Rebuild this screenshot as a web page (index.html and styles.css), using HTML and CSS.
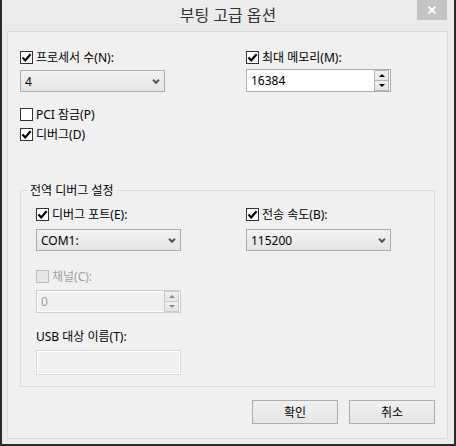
FILE: index.html
```html
<!DOCTYPE html>
<html lang="ko">
<head>
    <meta charset="UTF-8">
    <title>부팅 고급 옵션</title>
    <link rel="stylesheet" href="styles.css">
</head>
<body>
    <div class="window">
        <div class="titlebar">
            <span class="title">부팅 고급 옵션</span>
            <span class="close">
                <svg width="10" height="8" viewBox="0 0 10 8"><path d="M1.5 0.5 L8.5 7.5 M8.5 0.5 L1.5 7.5" stroke="#fff" stroke-width="2" fill="none"/></svg>
            </span>
        </div>

        <div class="panel">
            <div class="columns top">
                <div class="col">
                    <label class="check">
                        <span class="box"><svg width="11" height="11" viewBox="0 0 11 11"><path d="M1.5 5.6 L4.2 8.4 L9.6 2.2" stroke="#000" stroke-width="2.2" fill="none"/></svg></span>
                        프로세서 수(N):
                    </label>
                    <div class="combo">
                        <span>4</span>
                        <svg width="8" height="5" viewBox="0 0 8 5"><path d="M1 0.8 L4 3.8 L7 0.8" stroke="#555" stroke-width="2" fill="none"/></svg>
                    </div>
                    <label class="check pci">
                        <span class="box"></span>
                        PCI 잠금(P)
                    </label>
                    <label class="check debug">
                        <span class="box"><svg width="11" height="11" viewBox="0 0 11 11"><path d="M1.5 5.6 L4.2 8.4 L9.6 2.2" stroke="#000" stroke-width="2.2" fill="none"/></svg></span>
                        디버그(D)
                    </label>
                </div>
                <div class="col">
                    <label class="check">
                        <span class="box"><svg width="11" height="11" viewBox="0 0 11 11"><path d="M1.5 5.6 L4.2 8.4 L9.6 2.2" stroke="#000" stroke-width="2.2" fill="none"/></svg></span>
                        최대 메모리(M):
                    </label>
                    <div class="spin memory">
                        <span class="value">16384</span>
                        <span class="spin-btns">
                            <span class="sb"><span class="up"></span></span>
                            <span class="sb"><span class="down"></span></span>
                        </span>
                    </div>
                </div>
            </div>

            <fieldset class="group">
                <legend>전역 디버그 설정</legend>
                <div class="columns inner">
                    <div class="col">
                        <label class="check">
                            <span class="box"><svg width="11" height="11" viewBox="0 0 11 11"><path d="M1.5 5.6 L4.2 8.4 L9.6 2.2" stroke="#000" stroke-width="2.2" fill="none"/></svg></span>
                            디버그 포트(E):
                        </label>
                        <div class="combo port">
                            <span>COM1:</span>
                            <svg width="8" height="5" viewBox="0 0 8 5"><path d="M1 0.8 L4 3.8 L7 0.8" stroke="#555" stroke-width="2" fill="none"/></svg>
                        </div>
                    </div>
                    <div class="col">
                        <label class="check">
                            <span class="box"><svg width="11" height="11" viewBox="0 0 11 11"><path d="M1.5 5.6 L4.2 8.4 L9.6 2.2" stroke="#000" stroke-width="2.2" fill="none"/></svg></span>
                            전송 속도(B):
                        </label>
                        <div class="combo port">
                            <span>115200</span>
                            <svg width="8" height="5" viewBox="0 0 8 5"><path d="M1 0.8 L4 3.8 L7 0.8" stroke="#555" stroke-width="2" fill="none"/></svg>
                        </div>
                    </div>
                </div>

                <label class="check disabled channel">
                    <span class="box"></span>
                    채널(C):
                </label>
                <div class="spin disabled">
                    <span class="value">0</span>
                    <span class="spin-btns">
                        <span class="sb"><span class="up"></span></span>
                        <span class="sb"><span class="down"></span></span>
                    </span>
                </div>

                <div class="field-label">USB 대상 이름(T):</div>
                <div class="textbox"></div>
            </fieldset>

            <div class="buttons">
                <button>확인</button>
                <button>취소</button>
            </div>
        </div>
    </div>
</body>
</html>
```

FILE: styles.css
```css
:root {
    --window-bg: #ebebeb;
    --panel-bg: #f0f0f0;
    --line: #dcdcdc;
    --control-border: #acacac;
    --disabled-text: #a0a0a0;
}

body {
    margin: 0;
    font-family: "Noto Sans", "Noto Sans CJK KR", sans-serif;
    font-size: 12px;
    line-height: 15px;
    color: #000;
}

.window {
    width: 456px;
    height: 446px;
    box-sizing: border-box;
    background: var(--window-bg);
    border: 2px solid #2b2b2b;
    border-top: none;
}

.titlebar {
    height: 31px;
    display: grid;
    grid-template-columns: 1fr auto 1fr;
    padding-right: 7px;
    padding-left: 7px;
}

.title {
    grid-column: 2;
    font-size: 16px;
    line-height: 20px;
    margin-top: 5px;
    color: #333;
}

.close {
    grid-column: 3;
    justify-self: end;
    width: 30px;
    height: 20px;
    background: #c4c4c4;
    display: flex;
    align-items: center;
    justify-content: center;
}

.panel {
    margin: 0 6px 0 5px;
    height: 408px;
    box-sizing: border-box;
    border: 1px solid #dadada;
    background: var(--panel-bg);
    padding: 18px 12px 0 12px;
}

.columns {
    display: grid;
    grid-template-columns: 145px 145px;
    column-gap: 81px;
}

.columns.inner {
    column-gap: 65px;
}

.col {
    display: flex;
    flex-direction: column;
}

.check {
    display: flex;
    align-items: center;
    gap: 3px;
    height: 15px;
    white-space: nowrap;
}

.box {
    width: 13px;
    height: 13px;
    box-sizing: border-box;
    border: 1px solid #333;
    background: #fff;
    display: flex;
    flex-shrink: 0;
}

.check.disabled {
    color: var(--disabled-text);
}

.check.disabled .box {
    border-color: #bcbcbc;
    background: #e6e6e6;
}

.pci {
    margin-top: 15px;
}

.debug {
    margin-top: 5px;
}

.combo {
    margin-top: 5px;
    height: 22px;
    box-sizing: border-box;
    border: 1px solid var(--control-border);
    background: linear-gradient(#f2f2f2, #e5e5e5);
    padding: 0 4px;
    display: flex;
    align-items: center;
    justify-content: space-between;
}

.combo.port {
    margin-top: 7px;
}

.spin {
    height: 23px;
    box-sizing: border-box;
    border: 1px solid var(--control-border);
    background: #fff;
    display: flex;
}

.spin.memory {
    margin-top: 4px;
}

.spin .value {
    flex: 1;
    padding-left: 4px;
    line-height: 21px;
}

.spin-btns {
    width: 15px;
    margin: 0 1px 0 0;
    display: grid;
    grid-template-rows: 1fr 1fr;
}

.sb {
    box-sizing: border-box;
    border: 1px solid #b4b4b4;
    background: linear-gradient(#f2f2f2, #e5e5e5);
    display: flex;
    align-items: center;
    justify-content: center;
}

.sb + .sb {
    border-top: none;
}

.up {
    border-left: 3px solid transparent;
    border-right: 3px solid transparent;
    border-bottom: 3px solid #000;
}

.down {
    border-left: 3px solid transparent;
    border-right: 3px solid transparent;
    border-top: 3px solid #000;
}

.group {
    margin: 41px 0 0 0;
    border: 1px solid var(--line);
    padding: 9px 12px 11px 15px;
    min-width: 0;
}

.group legend {
    padding: 0 3px;
    margin-left: -9px;
    line-height: 15px;
}

.channel {
    margin-top: 18px;
}

.spin.disabled {
    margin-top: 6px;
    width: 145px;
    background: var(--panel-bg);
    border-color: #cccccc;
    box-shadow: inset 0 0 0 1px #fff;
    color: var(--disabled-text);
}

.spin.disabled .sb {
    border-color: #c8c8c8;
}

.spin.disabled .up {
    border-bottom-color: #8a8a8a;
}

.spin.disabled .down {
    border-top-color: #8a8a8a;
}

.field-label {
    margin-top: 16px;
}

.textbox {
    margin-top: 6px;
    width: 145px;
    height: 25px;
    box-sizing: border-box;
    border: 1px solid #d9d9d9;
    box-shadow: inset 0 0 0 1px #fff;
    background: var(--panel-bg);
}

.buttons {
    margin-top: 13px;
    display: flex;
    justify-content: flex-end;
    gap: 11px;
}

.buttons button {
    width: 86px;
    height: 24px;
    border: 1px solid #adadad;
    background: linear-gradient(#f0f0f0, #e5e5e5);
    font-family: inherit;
    font-size: 12px;
    color: #000;
    padding: 0;
}
```
